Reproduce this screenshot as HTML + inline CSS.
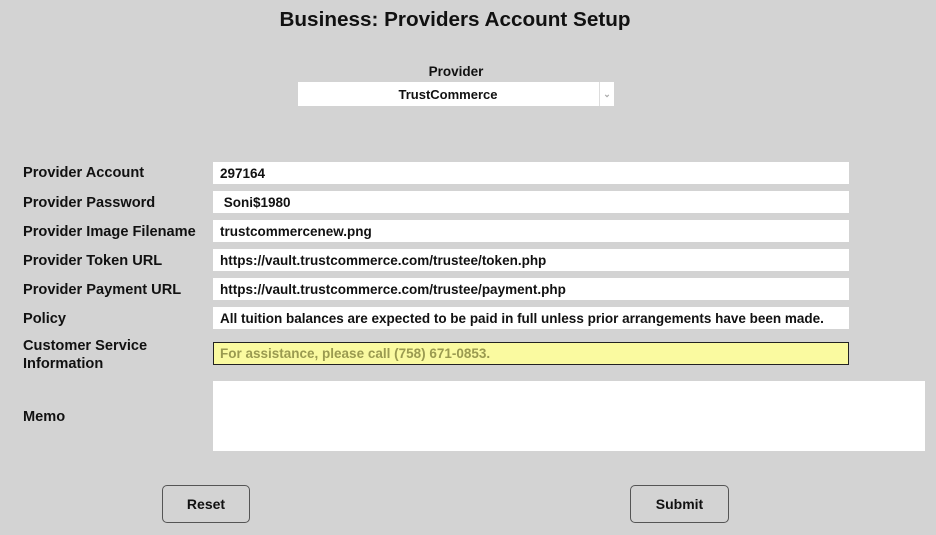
<!DOCTYPE html>
<html><head><style>
body{margin:0;width:936px;height:535px;background:#d3d3d3;font-family:"Liberation Sans",sans-serif;position:relative;overflow:hidden}
.a{position:absolute}
h1{position:absolute;left:0;width:910px;top:8px;margin:0;text-align:center;font-size:20.7px;font-weight:bold;color:#111}
.l{position:absolute;left:23px;font-size:14.6px;font-weight:bold;color:#111}
.i{position:absolute;left:213px;width:636px;height:22px;background:#fff;font-size:13.5px;font-weight:bold;color:#111;line-height:23px;padding-left:7px;box-sizing:border-box}
.b{position:absolute;top:485px;height:38px;border:1px solid #555;border-radius:5px;box-sizing:border-box;background:#d3d3d3;font-size:14px;font-weight:bold;text-align:center;line-height:36px;color:#111}
</style></head><body>
<h1>Business: Providers Account Setup</h1>
<div class="a" style="left:298px;width:316px;top:64px;text-align:center;font-size:13.5px;font-weight:bold;color:#111">Provider</div>
<div class="a" style="left:298px;top:82px;width:316px;height:24px;background:#fff;font-size:13px;font-weight:bold;line-height:26px;text-align:center;color:#111"><span style="margin-right:16px">TrustCommerce</span><span style="position:absolute;right:0;top:0;width:14px;height:24px;border-left:1px solid #ddd;color:#aaa;font-size:9px;line-height:24px">&#8964;</span></div>
<div class="l" style="top:165px">Provider Account</div><div class="i" style="top:162px">297164</div>
<div class="l" style="top:195px">Provider Password</div><div class="i" style="top:191px">&nbsp;Soni$1980</div>
<div class="l" style="top:224px">Provider Image Filename</div><div class="i" style="top:220px">trustcommercenew.png</div>
<div class="l" style="top:253px">Provider Token URL</div><div class="i" style="top:249px">https://vault.trustcommerce.com/trustee/token.php</div>
<div class="l" style="top:282px">Provider Payment URL</div><div class="i" style="top:278px">https://vault.trustcommerce.com/trustee/payment.php</div>
<div class="l" style="top:311px">Policy</div><div class="i" style="top:307px">All tuition balances are expected to be paid in full unless prior arrangements have been made.</div>
<div class="l" style="top:337px;line-height:18px">Customer Service<br>Information</div>
<div class="i" style="top:342px;height:23px;background:#fafaa0;border:1px solid #222;color:#9a9a50;line-height:21px;padding-left:6px">For assistance, please call (758) 671-0853.</div>
<div class="l" style="top:409px">Memo</div>
<div class="a" style="left:213px;top:381px;width:712px;height:70px;background:#fff"></div>
<div class="b" style="left:162px;width:88px">Reset</div>
<div class="b" style="left:630px;width:99px">Submit</div>
</body></html>
